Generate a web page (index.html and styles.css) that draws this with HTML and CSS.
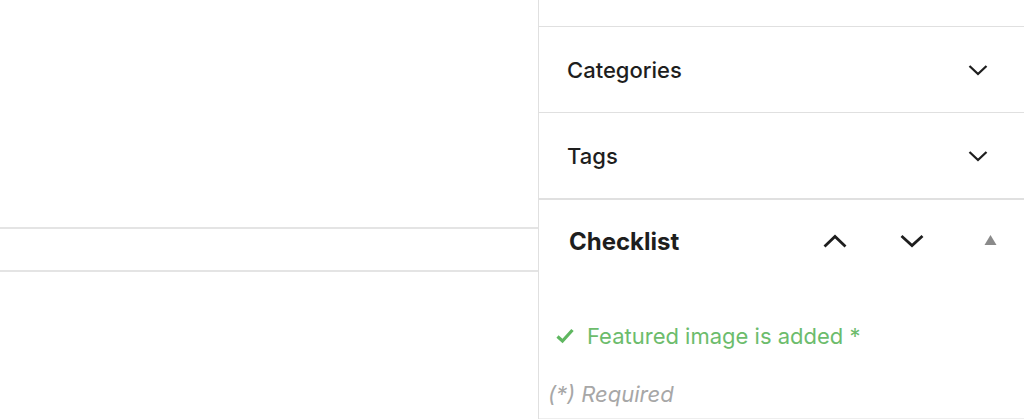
FILE: index.html
```html
<!DOCTYPE html>
<html lang="en">
<head>
<meta charset="utf-8">
<title>Editor sidebar</title>
<link rel="stylesheet" href="styles.css">
</head>
<body>
<div class="layout">
  <main class="main">
    <div class="main-top"></div>
    <div class="main-row"></div>
    <div class="main-rest"></div>
  </main>
  <aside class="sidebar">
    <div class="panel-top"></div>
    <section class="panel">
      <h2 class="panel-title">Categories</h2>
      <svg class="chev" width="20" height="14" viewBox="0 0 20 14"><path d="M1.5 3 10 11 18.5 3" fill="none" stroke="#1e1e1e" stroke-width="2.3"/></svg>
    </section>
    <section class="panel panel-tags">
      <h2 class="panel-title">Tags</h2>
      <svg class="chev" width="20" height="14" viewBox="0 0 20 14"><path d="M1.5 3 10 11 18.5 3" fill="none" stroke="#1e1e1e" stroke-width="2.3"/></svg>
    </section>
    <section class="checklist">
      <div class="check-head">
        <h2 class="check-title">Checklist</h2>
        <div class="check-actions">
          <svg class="act act-up" width="24" height="16" viewBox="0 0 24 16"><path d="M1.5 13.5 12 3.5l10.5 10" fill="none" stroke="#1e1e1e" stroke-width="2.8"/></svg>
          <svg class="act act-down" width="24" height="16" viewBox="0 0 24 16"><path d="M1.5 3 12 12.5 22.5 3" fill="none" stroke="#1e1e1e" stroke-width="2.8"/></svg>
          <svg class="tri" width="13" height="12" viewBox="0 0 13 12"><path d="M6.5 1 12.5 11H.5z" fill="#8a8a8a"/></svg>
        </div>
      </div>
      <div class="check-body">
        <p class="check-item">
          <svg class="tick" width="18" height="16" viewBox="0 0 18 16"><path d="M1.5 8.5 6.5 13 16.5 2" fill="none" stroke="#5fb760" stroke-width="3.2"/></svg>
          <span>Featured image is added *</span>
        </p>
        <p class="required">(*) Required</p>
      </div>
    </section>
  </aside>
</div>
</body>
</html>
```
FILE: styles.css
```css
* { box-sizing: border-box; }
html, body { margin: 0; padding: 0; background: #fff; }
body { font-family: Inter, "Noto Sans", sans-serif; color: #1e1e1e; }
.layout { display: flex; height: 419px; overflow: hidden; }
.main { width: 539px; flex: none; border-right: 1px solid #e0e0e0; display: flex; flex-direction: column; }
.main-top { height: 229px; border-bottom: 2px solid #e4e4e4; }
.main-row { height: 43px; border-bottom: 2px solid #e4e4e4; }
.main-rest { flex: 1; }
.sidebar { flex: 1; display: flex; flex-direction: column; }
.panel-top { height: 27px; border-bottom: 1px solid #e0e0e0; }
.panel { height: 86px; border-bottom: 1px solid #e0e0e0; display: flex; align-items: center; justify-content: space-between; padding: 1px 36px 0 28px; }
.panel-tags { height: 87px; border-bottom: 2px solid #e0e0e0; }
.panel-title { margin: 0; font-size: 22px; font-weight: 500; letter-spacing: 0; }
.chev { display: block; }
.checklist { flex: 1; border-bottom: 1px solid #eee; }
.check-head { height: 82px; display: flex; align-items: center; justify-content: space-between; padding: 0 27px 0 30px; }
.check-title { margin: 0; font-size: 24px; font-weight: 700; }
.check-actions { display: flex; align-items: center; }
.act { display: block; }
.act-up { margin-right: 53px; }
.act-down { margin-right: 60px; }
.tri { display: block; margin-top: -2px; }
.check-body { padding: 39px 0 0 9px; }
.check-item { margin: 0; display: flex; align-items: center; gap: 13px; padding-left: 8px; font-size: 22px; line-height: 30px; color: #6cbc6c; }
.tick { display: block; }
.required { margin: 28px 0 0; font-size: 22px; line-height: 30px; font-style: italic; color: #a7a7a7; }
```
